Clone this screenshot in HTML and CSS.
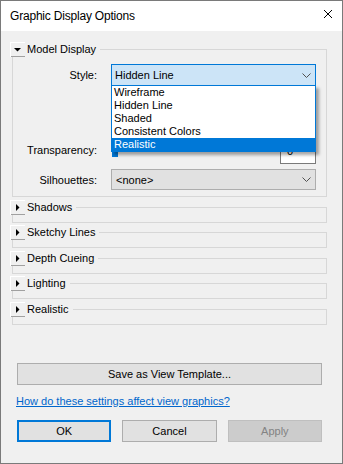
FILE: index.html
```html
<!DOCTYPE html>
<html>
<head>
<meta charset="utf-8">
<link rel="stylesheet" href="styles.css">
</head>
<body>
<div class="window">
  <div class="titlebar">
    <span class="title">Graphic Display Options</span>
    <svg class="close" width="10" height="10" viewBox="0 0 10 10"><path d="M1 1 L9 9 M9 1 L1 9" stroke="#000" stroke-width="1" fill="none"/></svg>
  </div>
  <div class="content">
    <div class="group">
      <div class="ghead">
        <span class="toggle"><svg width="15" height="15" viewBox="0 0 15 15"><polygon points="4,6 11,6 7.5,9.5" fill="#000"/></svg></span>
        <span class="glabel">Model Display</span>
        <span class="gline"></span>
      </div>
      <div class="gbody open">
        <div class="row">
          <label class="lbl">Style:</label>
          <div class="combo focus">
            <span>Hidden Line</span>
            <svg class="chev" width="9" height="5" viewBox="0 0 9 5"><path d="M0.5 0.5 L4.5 4.5 L8.5 0.5" stroke="#505050" fill="none"/></svg>
            <ul class="droplist">
              <li>Wireframe</li>
              <li>Hidden Line</li>
              <li>Shaded</li>
              <li>Consistent Colors</li>
              <li class="sel">Realistic</li>
            </ul>
          </div>
        </div>
        <div class="row row-trans">
          <label class="lbl lbl-top">Transparency:</label>
          <div class="slider">
            <span class="thumb"></span>
            <span class="num">0</span>
          </div>
        </div>
        <div class="row row-sil">
          <label class="lbl lbl-low">Silhouettes:</label>
          <div class="combo short">
            <span class="ctext">&lt;none&gt;</span>
            <svg class="chev" width="9" height="5" viewBox="0 0 9 5"><path d="M0.5 0.5 L4.5 4.5 L8.5 0.5" stroke="#505050" fill="none"/></svg>
          </div>
        </div>
      </div>
    </div>
    <div class="group">
      <div class="ghead">
        <span class="toggle"><svg width="15" height="15" viewBox="0 0 15 15"><polygon points="6,4 6,11 9.5,7.5" fill="#000"/></svg></span>
        <span class="glabel">Shadows</span>
        <span class="gline"></span>
      </div>
      <div class="gbody"></div>
    </div>
    <div class="group">
      <div class="ghead">
        <span class="toggle"><svg width="15" height="15" viewBox="0 0 15 15"><polygon points="6,4 6,11 9.5,7.5" fill="#000"/></svg></span>
        <span class="glabel">Sketchy Lines</span>
        <span class="gline"></span>
      </div>
      <div class="gbody"></div>
    </div>
    <div class="group">
      <div class="ghead">
        <span class="toggle"><svg width="15" height="15" viewBox="0 0 15 15"><polygon points="6,4 6,11 9.5,7.5" fill="#000"/></svg></span>
        <span class="glabel">Depth Cueing</span>
        <span class="gline"></span>
      </div>
      <div class="gbody"></div>
    </div>
    <div class="group">
      <div class="ghead">
        <span class="toggle"><svg width="15" height="15" viewBox="0 0 15 15"><polygon points="6,4 6,11 9.5,7.5" fill="#000"/></svg></span>
        <span class="glabel">Lighting</span>
        <span class="gline"></span>
      </div>
      <div class="gbody"></div>
    </div>
    <div class="group">
      <div class="ghead">
        <span class="toggle"><svg width="15" height="15" viewBox="0 0 15 15"><polygon points="6,4 6,11 9.5,7.5" fill="#000"/></svg></span>
        <span class="glabel">Realistic</span>
        <span class="gline"></span>
      </div>
      <div class="gbody"></div>
    </div>
  </div>
  <div class="footer">
    <button class="btn">Save as View Template...</button>
    <a class="link" href="#">How do these settings affect view graphics?</a>
    <div class="btnrow">
      <button class="btn default">OK</button>
      <button class="btn">Cancel</button>
      <button class="btn disabled">Apply</button>
    </div>
  </div>
</div>
</body>
</html>
```

FILE: styles.css
```css
html, body {
  margin: 0;
  padding: 0;
}
body {
  font-family: "Liberation Sans", Arial, sans-serif;
  font-size: 11px;
  color: #000;
  background: #f0f0f0;
}
.window {
  width: 343px;
  height: 464px;
  box-sizing: border-box;
  border: 1px solid #7a7a7a;
  background: #f0f0f0;
  display: flex;
  flex-direction: column;
}
.titlebar {
  flex: none;
  height: 30px;
  background: #fff;
  display: flex;
  align-items: center;
  padding: 0 9px;
}
.title {
  flex: 1;
  font-size: 12px;
  letter-spacing: -0.2px;
}
.close {
  align-self: flex-start;
  margin-top: 8px;
}
.content {
  padding: 11px 15px 0 9px;
}
.group + .group {
  margin-top: 2.6px;
}
.ghead {
  display: flex;
  align-items: center;
  height: 15px;
}
.toggle {
  position: relative;
  z-index: 1;
  flex: none;
  width: 15px;
  height: 15px;
  background: #f0f0f0;
  box-shadow: inset 1px 1px 0 #ffffff, inset 0 -1px 0 #a0a0a0;
}
.toggle svg {
  display: block;
}
.glabel {
  margin-left: 2px;
  line-height: 13px;
}
.gline {
  flex: 1;
  height: 0;
  border-top: 1px solid #d7d7d7;
  margin-left: 4px;
}
.gbody {
  margin: -7px 0 0 2px;
  height: 15px;
  box-sizing: border-box;
  border: 1px solid #d7d7d7;
  border-top: 0;
}
.gbody.open {
  height: auto;
  padding: 14px 10px 6px 0;
}
.row {
  display: grid;
  grid-template-columns: 84px 1fr;
  column-gap: 14px;
  align-items: center;
}
.lbl {
  text-align: right;
  line-height: 13px;
}
.lbl-top {
  align-self: start;
  padding-top: 2px;
}
.lbl-low {
  padding-top: 2px;
}
.row-trans {
  margin-top: 56px;
}
.row-sil {
  margin-top: 5px;
}
.combo {
  position: relative;
  height: 22px;
  box-sizing: border-box;
  border: 1px solid #adadad;
  background: #e1e1e1;
  display: flex;
  align-items: center;
  padding-left: 3px;
}
.combo.short {
  height: 21px;
}
.combo.focus {
  border-color: #0078d7;
  background: #cce4f7;
}
.ctext {
  margin-left: 1px;
}
.chev {
  margin-left: auto;
  margin-right: 4px;
  display: block;
}
.droplist {
  position: absolute;
  top: 100%;
  left: -1px;
  right: -1px;
  z-index: 2;
  margin: 0;
  padding: 0;
  list-style: none;
  background: #fff;
  border: 1px solid #0078d7;
  box-shadow: 3px 3px 3px rgba(0, 0, 0, 0.35);
}
.droplist li {
  height: 13px;
  line-height: 13px;
  padding-left: 2px;
  white-space: nowrap;
}
.droplist li.sel {
  background: #0078d7;
  color: #fff;
}
.slider {
  display: flex;
  height: 22px;
}
.thumb {
  width: 6px;
  height: 15px;
  margin-left: 1px;
  background: #0078d7;
}
.num {
  margin-left: auto;
  width: 36px;
  height: 22px;
  box-sizing: border-box;
  border: 1px solid #7a7a7a;
  background: #fff;
  padding: 2px 0 0 6px;
  line-height: 13px;
}
.footer {
  margin-top: auto;
  padding: 0 20px 21px 16px;
  display: flex;
  flex-direction: column;
}
.btn {
  height: 22px;
  box-sizing: border-box;
  margin: 0;
  padding: 0;
  border: 1px solid #adadad;
  background: #e1e1e1;
  font: inherit;
  color: #000;
  display: flex;
  align-items: center;
  justify-content: center;
}
.btn.default {
  border: 2px solid #0078d7;
}
.btn.disabled {
  background: #cccccc;
  border-color: #bfbfbf;
  color: #838383;
}
.link {
  margin: 9px 0 12px -1px;
  height: 14px;
  line-height: 14px;
  color: #0066cc;
  text-decoration: underline;
  white-space: nowrap;
}
.btnrow {
  display: grid;
  grid-template-columns: repeat(3, 1fr);
  column-gap: 11px;
}
```
